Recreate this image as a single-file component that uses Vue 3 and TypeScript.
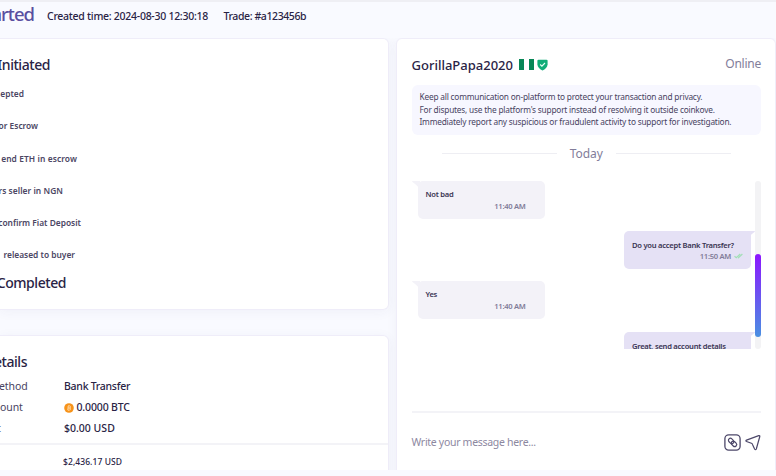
<script setup lang="ts">
interface Step { text: string; right: number; spacing: number }
interface Message { text: string; time: string; mine: boolean }

const steps: Step[] = [
  { text: 'epted', right: 24, spacing: 0 },
  { text: 'or Escrow', right: 38, spacing: 0 },
  { text: 'end ETH in escrow', right: 77, spacing: 0.1 },
  { text: 'rs seller in NGN', right: 63, spacing: 0.05 },
  { text: 'confirm Fiat Deposit', right: 81, spacing: 0 },
  { text: 'released to buyer', right: 75, spacing: 0 },
]

const messages: Message[] = [
  { text: 'Not bad', time: '11:40 AM', mine: false },
  { text: 'Do you accept Bank Transfer?', time: '11:50 AM', mine: true },
  { text: 'Yes', time: '11:40 AM', mine: false },
  { text: 'Great, send account details', time: '11:50 AM', mine: true },
]
</script>

<template>
  <div class="page">
    <header class="header">
      <h1>arted</h1>
      <span class="created">Created time: 2024-08-30 12:30:18</span>
      <span class="trade">Trade: #a123456b</span>
    </header>
    <main class="columns">
      <div class="left">
        <section class="card progress">
          <h2 class="initiated">Initiated</h2>
          <ul class="steps">
            <li v-for="s in steps" :key="s.text" :style="{ width: s.right + 'px', letterSpacing: s.spacing + 'px' }"><span>{{ s.text }}</span></li>
          </ul>
          <h2 class="completed">Completed</h2>
        </section>
        <section class="card details">
          <h2 class="details-title">etails</h2>
          <dl>
            <div class="row"><dt class="method">ethod</dt><dd class="bank">Bank Transfer</dd></div>
            <div class="row"><dt class="amount">ount</dt>
              <dd class="btc">
                <svg class="coin" viewBox="0 0 10 10"><circle cx="5" cy="5" r="4.8" fill="#f7931a" /><path d="M4 3h1.6q1 0 1 1t-1 1H4.2 5.5q1.1 0 1.1 1t-1.1 1H3.7L4.2 3M5 2.3v.7M4.7 7v.7" fill="none" stroke="#ffe1b8" stroke-width=".75" /></svg>
                <span>0.0000 BTC</span>
              </dd>
            </div>
            <div class="row"><dt class="colon">t</dt><dd class="usd">$0.00 USD</dd></div>
          </dl>
          <div class="rate">$2,436.17 USD</div>
        </section>
      </div>
      <section class="card chat">
        <div class="chat-head">
          <div class="who">
            <span class="name">GorillaPapa2020</span>
            <span class="flag"><i></i><i></i></span>
            <svg class="shield" viewBox="0 0 11 12"><path d="M.4 1.8Q.4.7 1.5.7h8q1.1 0 1.1 1.1v3.5c0 3-2.5 5-5.1 6.3C2.900 10.300.4 8.300.4 5.300z" fill="#10ad78" /><path d="m3.200 5.500 1.700 1.700 3.100-3.200" fill="none" stroke="#e9fff7" stroke-width="1.100" /></svg>
          </div>
          <span class="online">Online</span>
        </div>
        <div class="notice">
          <p>Keep all communication on-platform to protect your transaction and privacy.</p>
          <p>For disputes, use the platform's support instead of resolving it outside coinkove.</p>
          <p>Immediately report any suspicious or fraudulent activity to support for investigation.</p>
        </div>
        <div class="day"><i></i><span>Today</span><i></i></div>
        <div class="thread">
          <div class="messages">
            <div v-for="(m, i) in messages" :key="i" class="message" :class="{ mine: m.mine }">
              <svg class="tail" viewBox="0 0 8 8"><path d="M0 0h8v8L6.500 6.500Q5.500 4.500.5 1z" /></svg>
              <div class="text">{{ m.text }}</div>
              <div class="time">
                <span>{{ m.time }}</span>
                <svg v-if="m.mine" class="ticks" viewBox="0 0 9 6"><path d="m.5 3.200 1.800 1.600L6.200 1M4 4.600l.4.200L8.400 1" fill="none" stroke="#a3dfb7" stroke-width="1.200" /></svg>
              </div>
            </div>
          </div>
          <div class="scrollbar"><i></i></div>
        </div>
        <div class="compose">
          <span class="placeholder">Write your message here...</span>
          <span class="actions">
            <svg class="attach" viewBox="0 0 17 17" fill="none" stroke="#4c4769"><rect x=".9" y=".9" width="15.200" height="15.200" rx="3.800" stroke-width="1.300" /><g transform="rotate(45 8.500 8.500)" stroke-width="1.200"><rect x="3.500" y="6.400" width="6" height="4" rx="2" /><rect x="7.500" y="6.400" width="6" height="4" rx="2" /></g></svg>
            <svg class="send" viewBox="0 0 16 17" fill="none" stroke="#4c4769" stroke-width="1.200" stroke-linejoin="round"><path d="M1.500 6.100 13.700 1.600Q15 1.200 14.800 2.500L11.300 15Q10.500 16.500 9.600 15L7.500 10.400Q7.200 9.600 6.400 9.300L1.500 7.500Q.3 6.800 1.500 6.100z" /></svg>
          </span>
        </div>
      </section>
    </main>
  </div>
</template>

<style>
body { margin: 0; }
</style>
<style scoped>
* { box-sizing: border-box; }
h1, h2, p, ul, dl, dd { margin: 0; padding: 0; }
.page { width: 776px; height: 476px; overflow: hidden; background: #f9faff; color: #292345; font-family: "Noto Sans", sans-serif; white-space: nowrap; }
.header { height: 38.4px; display: flex; border-top: 2px solid #efeff4; line-height: 28px; font-size: 10.5px; font-weight: 500; letter-spacing: -.27px; }
h1 { width: 34px; margin-right: 13px; display: flex; justify-content: flex-end; font-size: 18.5px; line-height: 23px; font-weight: 500; color: #594fa0; letter-spacing: -1px; }
.created { width: 176.500px; }
.trade { letter-spacing: -.4px; }
.columns { display: flex; gap: 7px; height: 432px; overflow: hidden; }
.left { width: 389px; display: flex; flex-direction: column; gap: 25px; }
.card { background: #fff; border: 1px solid #efedf9; box-shadow: 0 2px 12px rgba(64, 55, 120, .05); }
h2 { font-size: 14px; font-weight: 500; color: #292345; display: flex; justify-content: flex-end; letter-spacing: -.45px; }
.progress { height: 271.400px; flex: none; border-left: 0; border-radius: 0 6px 6px 0; padding-top: 10.600px; }
.initiated { width: 50px; height: 28px; line-height: 30px; }
.steps { list-style: none; padding-top: .4px; }
.steps li { height: 32.1px; line-height: 32px; display: flex; justify-content: flex-end; font-size: 8.4px; font-weight: 600; color: #4b4663; }
.completed { width: 66px; line-height: 23px; }
.details { height: 150px; flex: none; border-left: 0; border-radius: 0 6px 0 0; padding-top: 13px; }
.details-title { width: 27px; height: 26px; line-height: 26px; }
dl { height: 69px; border-bottom: 2px solid #f3f3f7; margin-top: 1px; }
.row { height: 21.300px; line-height: 21.300px; display: flex; font-size: 10.5px; }
dt { width: 64px; color: #48435f; letter-spacing: -.1px; }
dd { display: flex; align-items: center; font-weight: 500; }
.bank { letter-spacing: -.27px; }
.btc { letter-spacing: -.15px; }
.method { text-indent: -1px; }
.colon { text-indent: -3px; }
.coin { width: 10px; height: 10px; margin-right: 2.500px; }
.rate { padding-left: 63px; line-height: 33px; font-size: 8.5px; font-weight: 500; letter-spacing: .08px; }
.chat { width: 380px; height: 450px; border-radius: 6px; padding: 9.600px 14px 0 14.500px; }
.chat-head { height: 36px; display: flex; justify-content: space-between; }
.who { display: flex; align-items: center; height: 32px; }
.name { font-size: 13px; font-weight: 500; width: 107.500px; }
.flag { width: 15px; height: 11px; display: flex; justify-content: space-between; }
.flag i { width: 5px; background: #078757; }
.shield { width: 11px; height: 12px; margin-left: 3px; }
.online { font-size: 12px; line-height: 29px; color: #827d9a; letter-spacing: -.25px; }
.notice { height: 50px; border-radius: 6px; background: #f7f7ff; padding: 6.500px 8px; font-size: 8.3px; line-height: 12.500px; letter-spacing: -.2px; color: #48435f; }
.day { height: 38px; display: flex; align-items: center; justify-content: center; gap: 13px; font-size: 12px; color: #827d9a; letter-spacing: -.05px; }
.day i { width: 115px; height: 1px; background: #eeeef3; }
.thread { height: 168px; margin-top: 7.700px; display: flex; justify-content: space-between; overflow: hidden; }
.messages { width: 343.500px; display: flex; flex-direction: column; gap: 12.400px; }
.message { position: relative; width: 127px; height: 38px; flex: none; margin-left: 6px; padding: 6px 8px; border-radius: 5px; background: #f3f2f8; }
.message.mine { align-self: flex-end; margin: 0 4px 0 0; background: #e5e1f5; padding-top: 7px; }
.text { font-size: 7.6px; line-height: 14px; font-weight: 600; color: #393452; letter-spacing: -.26px; }
.time { display: flex; justify-content: flex-end; align-items: center; padding-right: 11px; font-size: 7.6px; line-height: 10px; color: #817c98; font-weight: 600; letter-spacing: -.3px; }
.mine .time { padding-right: 0; gap: 3px; line-height: 8px; }
.tail { position: absolute; top: 0; left: -6px; width: 8px; height: 8px; fill: #f3f2f8; }
.mine .tail { left: auto; right: -4px; transform: scaleX(-1); fill: #e5e1f5; }
.ticks { width: 9px; height: 6px; }
.scrollbar { width: 6px; background: #f3f3f5; border-radius: 3px; padding-top: 73px; }
.scrollbar i { display: block; height: 83px; border-radius: 3px; background: linear-gradient(#8c16ff, #4a90e2); }
.compose { margin-top: 62px; height: 60px; border-top: 2px solid #f3f3f7; display: flex; justify-content: space-between; align-items: center; }
.placeholder { font-size: 10.5px; color: #8d889f; letter-spacing: -.3px; }
.actions { display: flex; gap: 4px; align-items: center; padding-top: 2px; }
.attach { width: 17px; height: 17px; }
.send { width: 16px; height: 17px; }
</style>
